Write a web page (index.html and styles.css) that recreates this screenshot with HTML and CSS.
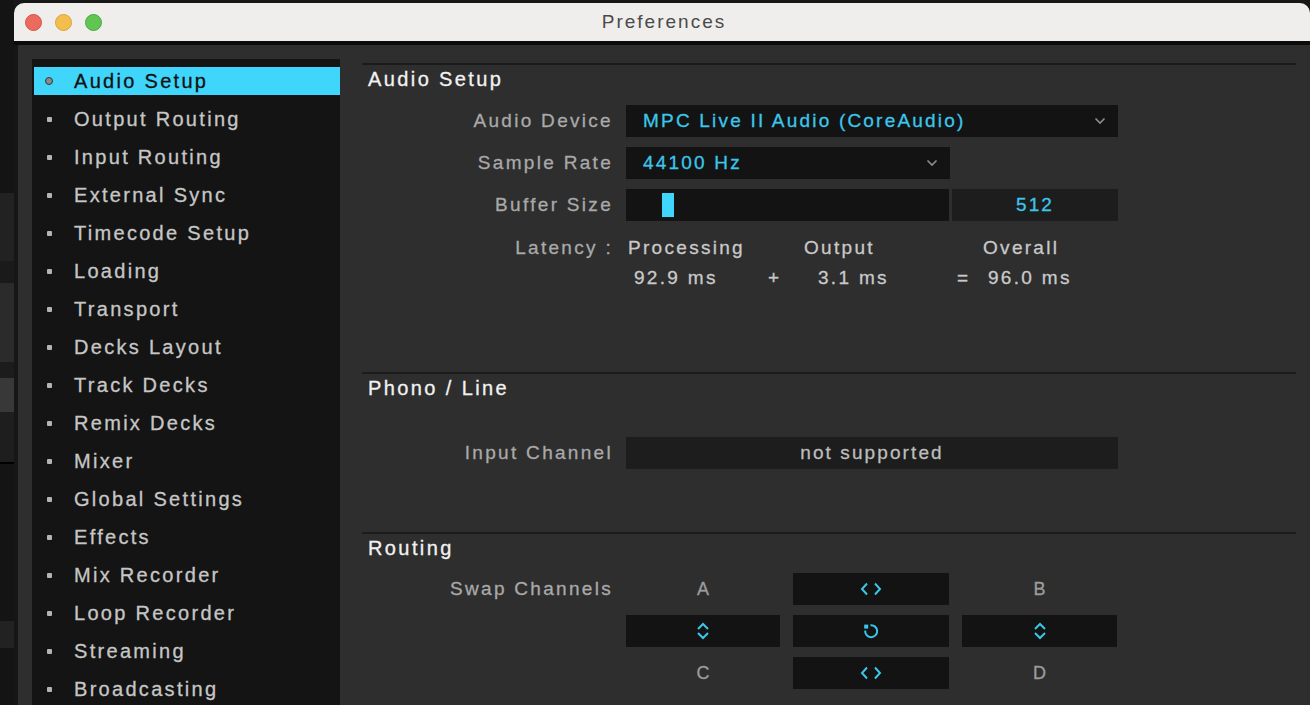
FILE: index.html
```html
<!doctype html>
<html lang="en">
  <head>
    <meta charset="UTF-8" />
    <meta name="viewport" content="width=device-width, initial-scale=1.0" />
    <title>Preferences</title>
    <link rel="stylesheet" href="styles.css">
  </head>
  <body>
    <!-- strip of the app window behind -->
    <div class="backdrop">
      <div class="strip s1"></div>
      <div class="strip s2"></div>
      <div class="strip s3"></div>
      <div class="strip s4"></div>
      <div class="strip s5"></div>
      <div class="strip s6"></div>
      <div class="strip s7"></div>
      <div class="strip s8"></div>
      <div class="strip s9"></div>
      <div class="strip s10"></div>
      <div class="strip s11"></div>
    </div>

    <div class="window">
      <div class="titlebar">
        <div class="lights">
          <span class="light close"></span>
          <span class="light minimize"></span>
          <span class="light zoom"></span>
        </div>
        <div class="title">Preferences</div>
        <div></div>
      </div>

      <div class="content">
        <ul class="nav">
          <li class="active"><span class="dot"></span>Audio Setup</li>
          <li><span class="dot"></span>Output Routing</li>
          <li><span class="dot"></span>Input Routing</li>
          <li><span class="dot"></span>External Sync</li>
          <li><span class="dot"></span>Timecode Setup</li>
          <li><span class="dot"></span>Loading</li>
          <li><span class="dot"></span>Transport</li>
          <li><span class="dot"></span>Decks Layout</li>
          <li><span class="dot"></span>Track Decks</li>
          <li><span class="dot"></span>Remix Decks</li>
          <li><span class="dot"></span>Mixer</li>
          <li><span class="dot"></span>Global Settings</li>
          <li><span class="dot"></span>Effects</li>
          <li><span class="dot"></span>Mix Recorder</li>
          <li><span class="dot"></span>Loop Recorder</li>
          <li><span class="dot"></span>Streaming</li>
          <li><span class="dot"></span>Broadcasting</li>
        </ul>

        <div class="panel">
          <section class="group audio">
            <h2>Audio Setup</h2>

            <div class="row first">
              <label>Audio Device</label>
              <div class="select wide">
                <span>MPC Live II Audio (CoreAudio)</span>
                <svg class="chevron" viewBox="0 0 12 8" width="12" height="8"><path d="M1.5 1.5 L6 6 L10.5 1.5"/></svg>
              </div>
            </div>

            <div class="row">
              <label>Sample Rate</label>
              <div class="select narrow">
                <span>44100 Hz</span>
                <svg class="chevron" viewBox="0 0 12 8" width="12" height="8"><path d="M1.5 1.5 L6 6 L10.5 1.5"/></svg>
              </div>
            </div>

            <div class="row">
              <label>Buffer Size</label>
              <div class="slider"><span class="handle"></span></div>
              <div class="value">512</div>
            </div>

            <div class="latency">
              <div class="lat-line heads">
                <label>Latency :</label>
                <span class="h-proc">Processing</span>
                <span class="h-out">Output</span>
                <span>Overall</span>
              </div>
              <div class="lat-line nums">
                <label></label>
                <span class="v-proc">92.9 ms</span>
                <span class="v-plus">+</span>
                <span class="v-out">3.1 ms</span>
                <span class="v-eq">=</span>
                <span>96.0 ms</span>
              </div>
            </div>
          </section>

          <section class="group phono">
            <h2>Phono / Line</h2>
            <div class="row first">
              <label>Input Channel</label>
              <div class="field wide">not supported</div>
            </div>
          </section>

          <section class="group routing">
            <h2>Routing</h2>
            <div class="row first swap">
              <label>Swap Channels</label>
              <div class="swap-grid">
                <div class="deck">A</div>
                <div class="btn">
                  <svg class="icon" viewBox="0 0 22 14" width="22" height="14"><path d="M7 1.5 L2 7 L7 12.5 M15 1.5 L20 7 L15 12.5"/></svg>
                </div>
                <div class="deck">B</div>

                <div class="btn">
                  <svg class="icon" viewBox="0 0 14 18" width="14" height="18"><path d="M2 7 L7 2 L12 7 M2 11 L7 16 L12 11"/></svg>
                </div>
                <div class="btn">
                  <svg class="icon" viewBox="0 0 16 16" width="16" height="16"><path d="M7.5 2.2 A6 6 0 1 1 2.2 7.5"/><rect class="tip" x="1.2" y="1.6" width="4" height="4"/></svg>
                </div>
                <div class="btn">
                  <svg class="icon" viewBox="0 0 14 18" width="14" height="18"><path d="M2 7 L7 2 L12 7 M2 11 L7 16 L12 11"/></svg>
                </div>

                <div class="deck">C</div>
                <div class="btn">
                  <svg class="icon" viewBox="0 0 22 14" width="22" height="14"><path d="M7 1.5 L2 7 L7 12.5 M15 1.5 L20 7 L15 12.5"/></svg>
                </div>
                <div class="deck">D</div>
              </div>
            </div>
          </section>
        </div>
      </div>
    </div>
  </body>
</html>
```

FILE: styles.css
```css
body {
  margin: 0;
  height: 705px;
  overflow: hidden;
  display: flex;
  background: #171717;
  font-family: "Liberation Sans", Arial, sans-serif;
}

/* app behind the dialog */
.backdrop {
  width: 14px;
  display: flex;
  flex-direction: column;
}
.strip { flex: none; }
.s1 { height: 193px; background: #141414; }
.s2 { height: 68px; background: #222; }
.s3 { height: 22px; background: #1a1a1a; }
.s4 { height: 79px; background: #2b2b2b; }
.s5 { height: 16px; background: #1c1c1c; }
.s6 { height: 34px; background: #383838; }
.s7 { height: 50px; background: #1e1e1e; }
.s8 { height: 2px; background: #000; }
.s9 { height: 157px; background: #141414; }
.s10 { height: 27px; background: #222; }
.s11 { flex: 1; background: #141414; }

.window {
  flex: 1;
  margin-top: 3px;
  display: flex;
  flex-direction: column;
  border-radius: 10px 10px 0 0;
  overflow: hidden;
}

.titlebar {
  height: 38px;
  flex: none;
  background: #efeeec;
  border-bottom: 4px solid #0b0b0b;
  display: grid;
  grid-template-columns: 1fr auto 1fr;
  align-items: center;
}
.lights {
  display: flex;
  gap: 13px;
  padding-left: 11px;
}
.light {
  width: 17px;
  height: 17px;
  border-radius: 50%;
  box-sizing: border-box;
}
.close { background: #ec6a5e; border: 1px solid #d2564b; }
.minimize { background: #f4be4f; border: 1px solid #d9a23a; }
.zoom { background: #61c554; border: 1px solid #4ba83f; }
.title {
  font-size: 19px;
  letter-spacing: 2px;
  color: #4a4a4a;
  padding-left: 4px;
}

.content {
  flex: 1;
  display: flex;
  min-height: 0;
  background: #2e2e2e;
  border-left: 4px solid #161616;
  padding-left: 14px;
  -webkit-text-stroke: 0.3px currentColor;
}

/* sidebar */
.nav {
  list-style: none;
  box-sizing: border-box;
  width: 308px;
  flex: none;
  margin: 14px 0 0;
  padding: 8px 0 0 2px;
  background: #141414;
}
.nav li {
  height: 28px;
  margin-bottom: 10px;
  display: flex;
  align-items: center;
  padding-left: 11px;
  font-size: 20px;
  letter-spacing: 2.3px;
  color: #c6c6c6;
}
.nav .dot {
  width: 8px;
  height: 8px;
  margin-right: 21px;
  display: flex;
  align-items: center;
  justify-content: center;
}
.nav .dot::before {
  content: "";
  width: 5px;
  height: 5px;
  border-radius: 1px;
  background: #b4b4b4;
}
.nav li.active {
  background: #40d6fb;
  color: #111;
}
.nav li.active .dot::before {
  flex: none;
  box-sizing: border-box;
  width: 8px;
  height: 8px;
  border-radius: 50%;
  background: #8a8a8a;
  border: 1.5px solid #2c3b40;
}

/* settings panel */
.panel {
  flex: 1;
  padding: 18px 14px 0 22px;
}
.group {
  border-top: 2px solid #1b1b1b;
}
.audio { height: 307px; }
.phono { height: 158px; }

.group h2 {
  margin: 0;
  height: 28px;
  line-height: 28px;
  padding-left: 6px;
  font-size: 20px;
  font-weight: normal;
  letter-spacing: 2.4px;
  color: #f2f2f2;
}

.row {
  display: flex;
  align-items: center;
  height: 32px;
  margin-bottom: 10px;
}
.audio .first { margin-top: 12px; }
.phono .first { margin-top: 35px; }
.routing .first { margin-top: 11px; }

.row label,
.lat-line label {
  width: 251px;
  flex: none;
  margin-right: 13px;
  text-align: right;
  font-size: 19px;
  letter-spacing: 2.3px;
  color: #a9a9a9;
}

.select {
  height: 32px;
  box-sizing: border-box;
  background: #131313;
  display: flex;
  align-items: center;
  justify-content: space-between;
  padding: 0 12px 0 17px;
  font-size: 19px;
  letter-spacing: 2.2px;
  color: #3cc6ea;
}
.wide { width: 492px; }
.narrow { width: 324px; }
.chevron {
  fill: none;
  stroke: #8e8e8e;
  stroke-width: 1.6;
}

.slider {
  width: 323px;
  height: 32px;
  box-sizing: border-box;
  padding: 4px 0 4px 36px;
  background: #131313;
}
.handle {
  display: block;
  width: 12px;
  height: 24px;
  background: #40d6fb;
}
.value {
  width: 166px;
  height: 32px;
  margin-left: 3px;
  line-height: 32px;
  text-align: center;
  background: #1d1d1d;
  font-size: 19px;
  letter-spacing: 2.1px;
  color: #3cc6ea;
}

.latency { margin-top: 13px; }
.lat-line {
  display: flex;
  height: 30px;
  line-height: 28px;
  font-size: 19px;
  letter-spacing: 2.3px;
  color: #c9c9c9;
}
.lat-line label { color: #a9a9a9; }
.heads .h-proc { width: 176px; padding-left: 2px; }
.heads .h-out { width: 179px; }
.nums .v-proc { width: 134px; padding-left: 8px; }
.nums .v-plus { width: 50px; }
.nums .v-out { width: 139px; }
.nums .v-eq { width: 31px; }

.field {
  height: 32px;
  line-height: 32px;
  text-align: center;
  background: #1d1d1d;
  font-size: 19px;
  letter-spacing: 2.1px;
  color: #bdbdbd;
}

/* swap channels */
.swap { align-items: flex-start; height: auto; }
.swap label { line-height: 32px; }
.swap-grid {
  display: grid;
  grid-template-columns: 154px 156px 155px;
  grid-auto-rows: 32px;
  column-gap: 13px;
  row-gap: 10px;
}
.deck {
  display: flex;
  align-items: center;
  justify-content: center;
  font-size: 18px;
  color: #9c9c9c;
}
.btn {
  display: flex;
  align-items: center;
  justify-content: center;
  background: #131313;
}
.icon {
  fill: none;
  stroke: #3cc6ea;
  stroke-width: 2;
}
.icon .tip {
  fill: #3cc6ea;
  stroke: none;
}
```
